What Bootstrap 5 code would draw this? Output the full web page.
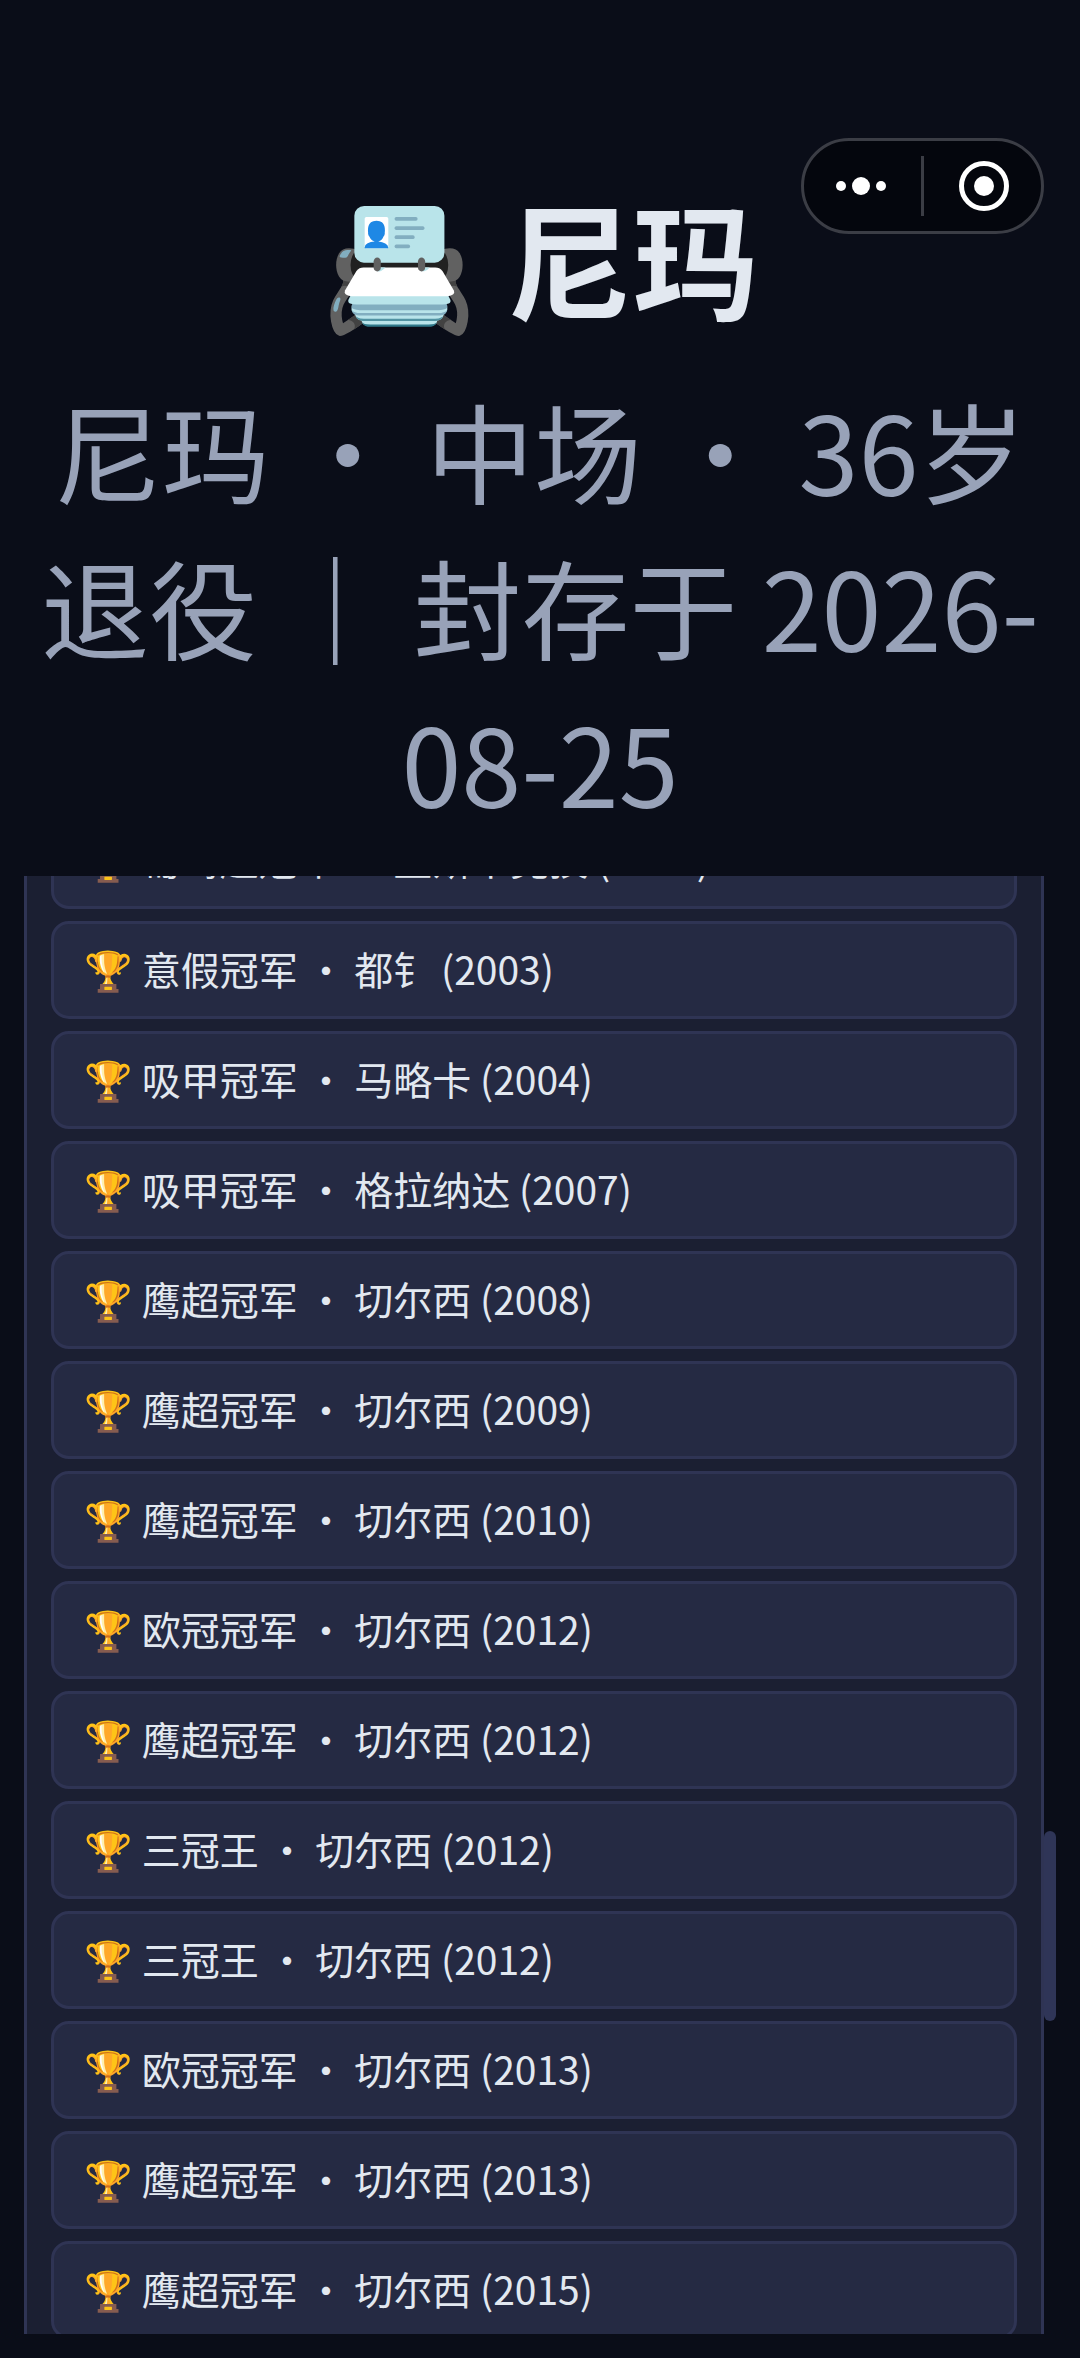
<!DOCTYPE html>
<html lang="zh-CN">
<head>
<meta charset="utf-8">
<meta name="viewport" content="width=device-width, initial-scale=1">
<title>尼玛</title>
<link href="https://cdn.jsdelivr.net/npm/bootstrap@5.3.0/dist/css/bootstrap.min.css" rel="stylesheet">
<script src="https://cdn.jsdelivr.net/npm/bootstrap@5.3.0/dist/js/bootstrap.bundle.min.js" defer></script>
<style>
body{background:#0a0d18;color:#e2e8f0;font-family:"Noto Sans CJK SC",sans-serif}
.screen{height:100vh;padding:172px 24px 24px}
.capsule{position:absolute;top:138px;right:36px;width:243px;height:96px;border:3px solid #3b3d45;border-radius:48px;background:#04060d}
.capsule button{background:none;border:0;padding:0;width:114px}
.capsule .split{width:3px;height:60px;background:#3b3d45}
.player-name{font-size:126px;font-weight:700;line-height:168px;margin-bottom:31px}
.player-info{font-size:108px;line-height:156px;color:#98a2b8;margin-bottom:37px}
.trophies{min-height:0;padding-right:12px}
.trophy-panel{background:#1b1f32;border:solid #2f3454;border-width:0 3px;padding:0 24px;gap:12px;margin-top:-65px}
.trophy{height:98px;border:3px solid #2f3454;border-radius:18px;background:#252a43;padding:0 30px 4px;font-size:39px;line-height:58px}
.thumb{position:absolute;right:0;top:955px;width:12px;height:190px;border-radius:6px;background:#2f3557}
</style>
</head>
<body>
<nav class="capsule d-flex align-items-center justify-content-between" aria-label="小程序">
  <button type="button" class="d-flex justify-content-center" aria-label="更多"><svg width="50" height="18" fill="#fff"><circle cx="5" cy="9" r="5"/><circle cx="25" cy="9" r="9"/><circle cx="45" cy="9" r="5"/></svg></button>
  <span class="split"></span>
  <button type="button" class="d-flex justify-content-center" aria-label="关闭"><svg width="50" height="50"><circle cx="25" cy="25" r="22.5" fill="none" stroke="#fff" stroke-width="5"/><circle cx="25" cy="25" r="10" fill="#fff"/></svg></button>
</nav>
<main class="screen d-flex flex-column">
  <h1 class="player-name text-center">📇 尼玛</h1>
  <p class="player-info text-center">尼玛 · 中场 · 36岁退役 ｜ 封存于 2026-08-25</p>
  <section class="trophies position-relative overflow-hidden flex-fill">
    <ul class="trophy-panel list-unstyled d-flex flex-column mb-0">
      <li class="trophy d-flex align-items-center flex-shrink-0">🏆 葡萄超冠军 · 里斯本竞技 (2002)</li>
      <li class="trophy d-flex align-items-center flex-shrink-0">🏆 意假冠军 · 都钅 (2003)</li>
      <li class="trophy d-flex align-items-center flex-shrink-0">🏆 吸甲冠军 · 马略卡 (2004)</li>
      <li class="trophy d-flex align-items-center flex-shrink-0">🏆 吸甲冠军 · 格拉纳达 (2007)</li>
      <li class="trophy d-flex align-items-center flex-shrink-0">🏆 鹰超冠军 · 切尔西 (2008)</li>
      <li class="trophy d-flex align-items-center flex-shrink-0">🏆 鹰超冠军 · 切尔西 (2009)</li>
      <li class="trophy d-flex align-items-center flex-shrink-0">🏆 鹰超冠军 · 切尔西 (2010)</li>
      <li class="trophy d-flex align-items-center flex-shrink-0">🏆 欧冠冠军 · 切尔西 (2012)</li>
      <li class="trophy d-flex align-items-center flex-shrink-0">🏆 鹰超冠军 · 切尔西 (2012)</li>
      <li class="trophy d-flex align-items-center flex-shrink-0">🏆 三冠王 · 切尔西 (2012)</li>
      <li class="trophy d-flex align-items-center flex-shrink-0">🏆 三冠王 · 切尔西 (2012)</li>
      <li class="trophy d-flex align-items-center flex-shrink-0">🏆 欧冠冠军 · 切尔西 (2013)</li>
      <li class="trophy d-flex align-items-center flex-shrink-0">🏆 鹰超冠军 · 切尔西 (2013)</li>
      <li class="trophy d-flex align-items-center flex-shrink-0">🏆 鹰超冠军 · 切尔西 (2015)</li>
    </ul>
    <span class="thumb"></span>
  </section>
</main>
</body>
</html>
